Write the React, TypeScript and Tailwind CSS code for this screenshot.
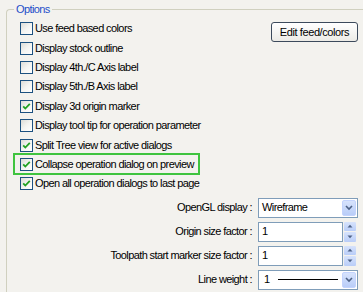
import React from "react";

function CheckBox({ checked }: { checked: boolean }) {
  return (
    <span className="relative inline-block w-[13px] h-[13px] shrink-0 border border-[#1c5180] bg-gradient-to-br from-[#dcdcd7] via-[#f4f4f1] to-white">
      {checked && (
        <svg className="absolute left-[1px] top-[1px]" width="9" height="9" viewBox="0 0 9 9">
          <path d="M1.2 4.3 L3.3 6.5 L7.8 1.8" fill="none" stroke="#21a121" strokeWidth="1.8" />
        </svg>
      )}
    </span>
  );
}

const rows: { label: string; checked: boolean; hl?: boolean }[] = [
  { label: "Use feed based colors", checked: false },
  { label: "Display stock outline", checked: false },
  { label: "Display 4th./C Axis label", checked: false },
  { label: "Display 5th./B Axis label", checked: false },
  { label: "Display 3d origin marker", checked: true },
  { label: "Display tool tip for operation parameter", checked: false },
  { label: "Split Tree view for active dialogs", checked: true },
  { label: "Collapse operation dialog on preview", checked: true, hl: true },
  { label: "Open all operation dialogs to last page", checked: true },
];

function DropBtn() {
  return (
    <span className="flex items-center justify-center w-[14px] h-[16px] rounded-[2px] border border-[#c3d3fd] bg-gradient-to-b from-[#d7e3fc] to-[#b9cdf8]">
      <svg width="8" height="6" viewBox="0 0 8 6">
        <path d="M1 1 L4 4 L7 1" fill="none" stroke="#4d6185" strokeWidth="1.6" />
      </svg>
    </span>
  );
}

function Spin() {
  return (
    <span className="flex flex-col w-[12px] h-[20px] gap-[1px]">
      <span className="flex-1 flex items-center justify-center rounded-[1px] bg-gradient-to-b from-[#d7e3fc] to-[#b9cdf8]">
        <svg width="6" height="4" viewBox="0 0 6 4">
          <path d="M0.5 3.5 L3 0.8 L5.5 3.5 Z" fill="#4d6185" />
        </svg>
      </span>
      <span className="flex-1 flex items-center justify-center rounded-[1px] bg-gradient-to-b from-[#d7e3fc] to-[#b9cdf8]">
        <svg width="6" height="4" viewBox="0 0 6 4">
          <path d="M0.5 0.5 L3 3.2 L5.5 0.5 Z" fill="#4d6185" />
        </svg>
      </span>
    </span>
  );
}

export default function App() {
  return (
    <div
      className="w-[363px] h-[292px] overflow-hidden bg-[#f3f2ee] text-black text-[11px] tracking-[-0.6px] leading-none flex flex-col pt-[9px] pl-[6px]"
      style={{ fontFamily: '"Liberation Sans", Arial, sans-serif' }}
    >
      <div className="relative flex-1 flex flex-col border-t border-l border-[#d0d0bf] rounded-tl-[4px]">
        <span className="absolute left-[7px] top-[-8px] px-[2px] bg-[#f3f2ee] text-[#1f4fc9] leading-[14px]">
          Options
        </span>
        <div className="flex justify-between">
          <div className="flex flex-col pt-[9px] pl-[13px]">
            {rows.map((r) => (
              <div key={r.label} className="relative h-[19.4px] flex items-center gap-[2px] whitespace-nowrap">
                <CheckBox checked={r.checked} />
                <span>{r.label}</span>
                {r.hl && (
                  <span className="absolute left-[-7px] top-[-2px] w-[187px] h-[22px] border-2 border-[#3fc43f]" />
                )}
              </div>
            ))}
          </div>
          <div className="pt-[12px] pr-[5px]">
            <button className="w-[87px] h-[20px] rounded-[3px] border border-[#3c4a5c] bg-gradient-to-b from-white to-[#ecebe6] text-[11px] tracking-[-0.4px]">
              Edit feed/colors
            </button>
          </div>
        </div>
        <div className="mt-[4px] grid grid-cols-[auto_100px] gap-y-[4px] gap-x-[6px] justify-end pr-[5px] items-center">
          <span className="text-right whitespace-nowrap">OpenGL display :</span>
          <div className="h-[20px] flex items-center justify-between border border-[#7f9db9] bg-white pl-[3px] pr-[1px]">
            <span>Wireframe</span>
            <DropBtn />
          </div>
          <span className="text-right whitespace-nowrap">Origin size factor :</span>
          <div className="h-[20px] flex items-center justify-between">
            <div className="w-[85px] h-[20px] flex items-center border border-[#7f9db9] bg-white pl-[3px]">1</div>
            <Spin />
            <span className="w-[1px]" />
          </div>
          <span className="text-right whitespace-nowrap">Toolpath start marker size factor :</span>
          <div className="h-[20px] flex items-center justify-between">
            <div className="w-[85px] h-[20px] flex items-center border border-[#7f9db9] bg-white pl-[3px]">1</div>
            <Spin />
            <span className="w-[1px]" />
          </div>
          <span className="text-right whitespace-nowrap">Line weight :</span>
          <div className="h-[20px] flex items-center justify-between border border-[#7f9db9] bg-white pl-[5px] pr-[1px]">
            <span className="flex items-center gap-[8px]">
              <span>1</span>
              <span className="w-[60px] h-[1px] bg-black" />
            </span>
            <DropBtn />
          </div>
        </div>
      </div>
    </div>
  );
}
